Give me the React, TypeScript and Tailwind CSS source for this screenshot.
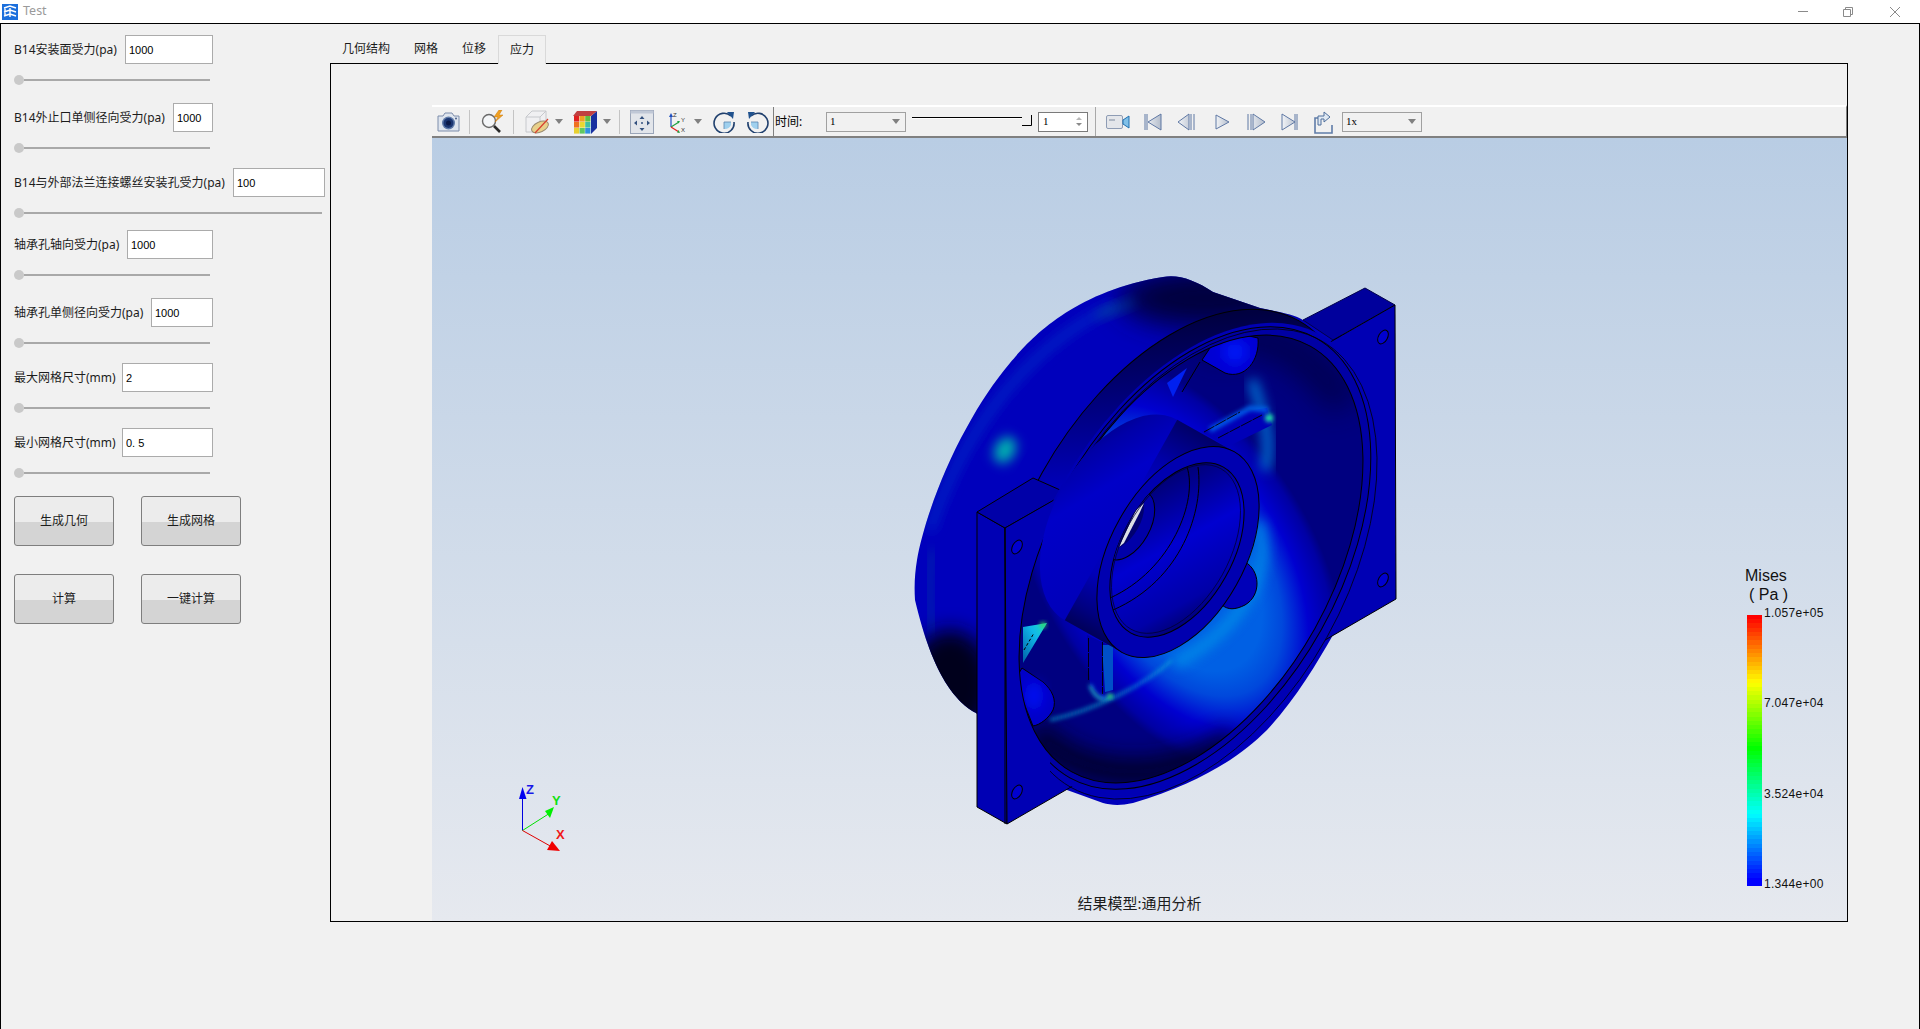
const ANGLE = -60.75;

type Row = {
  label: string;
  value: string;
  inputWidth: string;
  fieldWidth: string;
  top: string;
};

const rows: Row[] = [
  { label: "B14安装面受力(pa)", value: "1000", inputWidth: "w-[88px]", fieldWidth: "w-[199px]", top: "mt-[11px]" },
  { label: "B14外止口单侧径向受力(pa)", value: "1000", inputWidth: "w-[40px]", fieldWidth: "w-[199px]", top: "mt-[18px]" },
  { label: "B14与外部法兰连接螺丝安装孔受力(pa)", value: "100", inputWidth: "w-[92px]", fieldWidth: "w-[311px]", top: "mt-[15px]" },
  { label: "轴承孔轴向受力(pa)", value: "1000", inputWidth: "w-[86px]", fieldWidth: "w-[199px]", top: "mt-[12px]" },
  { label: "轴承孔单侧径向受力(pa)", value: "1000", inputWidth: "w-[62px]", fieldWidth: "w-[199px]", top: "mt-[18px]" },
  { label: "最大网格尺寸(mm)", value: "2", inputWidth: "w-[91px]", fieldWidth: "w-[199px]", top: "mt-[15px]" },
  { label: "最小网格尺寸(mm)", value: "0. 5", inputWidth: "w-[91px]", fieldWidth: "w-[199px]", top: "mt-[15px]" },
];

function Field({ row }: { row: Row }) {
  return (
    <div className={row.top}>
      <div className={`flex h-[29px] items-center justify-between ${row.fieldWidth}`}>
        <span className="whitespace-nowrap text-[12px] text-[#1c1c1c]">{row.label}</span>
        <input
          readOnly
          value={row.value}
          className={`h-[29px] border border-[#ababab] bg-white pl-[3px] font-['Liberation_Sans',sans-serif] text-[11px] text-black outline-none ${row.inputWidth}`}
        />
      </div>
      <div className={`mt-[11px] flex h-[10px] items-center ${row.fieldWidth === "w-[311px]" ? "w-[308px]" : "w-[196px]"}`}>
        <div className="h-[10px] w-[10px] rounded-full bg-[#c9c9c9]" />
        <div className="h-[2px] flex-1 bg-[#a9a9a9]" />
      </div>
    </div>
  );
}

function PanelButton({ text }: { text: string }) {
  return (
    <button className="h-[50px] w-[100px] rounded-[3px] border border-[#7e7e7e] bg-[linear-gradient(#ececec_52%,#d4d4d4_52%)] text-[12px] text-[#1c1c1c]">
      {text}
    </button>
  );
}

function Tilted(props: { cx: number; cy: number; rx: number; ry: number; fill?: string; stroke?: string; sw?: number }) {
  const { cx, cy, rx, ry, fill = "none", stroke = "none", sw = 1 } = props;
  return (
    <ellipse
      cx={cx}
      cy={cy}
      rx={rx}
      ry={ry}
      fill={fill}
      stroke={stroke}
      strokeWidth={sw}
      transform={`rotate(${ANGLE} ${cx} ${cy})`}
    />
  );
}

// quad joining a tilted ellipse to a copy of itself moved by (dx, dy)
function sweepPath(cx: number, cy: number, rx: number, ry: number, dx: number, dy: number) {
  const a = (ANGLE * Math.PI) / 180;
  const u = dx * Math.cos(a) + dy * Math.sin(a);
  const v = -dx * Math.sin(a) + dy * Math.cos(a);
  const t = Math.atan2(-ry * u, rx * v);
  const pt = (p: number) => [
    cx + rx * Math.cos(p) * Math.cos(a) - ry * Math.sin(p) * Math.sin(a),
    cy + rx * Math.cos(p) * Math.sin(a) + ry * Math.sin(p) * Math.cos(a),
  ];
  const [x1, y1] = pt(t);
  const [x2, y2] = pt(t + Math.PI);
  return `M${x1} ${y1}L${x1 + dx} ${y1 + dy}L${x2 + dx} ${y2 + dy}L${x2} ${y2}Z`;
}

function Arrow() {
  return <div className="h-0 w-0 border-x-[4px] border-t-[5px] border-x-transparent border-t-[#808080]" />;
}

function Sep() {
  return <div className="h-[24px] w-px bg-[#c4c4c4]" />;
}

function Combo({ text, width }: { text: string; width: string }) {
  return (
    <div className={`flex h-[20px] items-center justify-between border border-[#a0a0a0] pl-[3px] pr-[5px] font-['Liberation_Serif',serif] text-[11px] text-black ${width}`}>
      <span>{text}</span>
      <Arrow />
    </div>
  );
}

function CameraIcon() {
  return (
    <svg width="23" height="20" viewBox="0 0 23 20">
      <path d="M1 4h5l2-3h7l2 3h5v15H1z" fill="#dfe5ee" stroke="#7d8dab" strokeWidth="1" />
      <circle cx="11.5" cy="11" r="6.5" fill="#5f7aa8" />
      <circle cx="11.5" cy="11" r="5" fill="#1b3672" />
      <circle cx="11.5" cy="11" r="2.5" fill="#0b1a48" />
      <circle cx="19" cy="6.5" r="1" fill="#4a5f88" />
    </svg>
  );
}

function ZoomIcon() {
  return (
    <svg width="25" height="24" viewBox="0 0 25 24">
      <circle cx="9" cy="11" r="6.5" fill="#f4f6f8" stroke="#6a6a6a" strokeWidth="1.4" />
      <path d="M14 16l6 6" stroke="#2a2a2a" strokeWidth="2.6" />
      <path d="M19 0l-5 7h4l-3 5 8-7h-4l3-5z" fill="#f0a020" stroke="#c87810" strokeWidth="0.5" />
    </svg>
  );
}

function BoxIcon() {
  return (
    <svg width="27" height="24" viewBox="0 0 27 24">
      <path d="M1 7l6-6h14v14l-6 7H1z" fill="#f0f0f2" stroke="#c6c8cc" strokeWidth="1" />
      <path d="M1 7h14v15M15 7l6-6" fill="none" stroke="#c6c8cc" strokeWidth="1" />
      <ellipse cx="15" cy="17" rx="9" ry="5" fill="#e8d08a" stroke="#9a8a70" strokeWidth="1" transform="rotate(-25 15 17)" />
      <path d="M10 23L23 9" stroke="#d84030" strokeWidth="1.2" />
    </svg>
  );
}

function CubeIcon() {
  const cells = ["#e02020", "#f0a020", "#60c040", "#f07020", "#e8d830", "#40c0a0", "#e8d030", "#60c860", "#3090e0"];
  return (
    <svg width="24" height="24" viewBox="0 0 24 24">
      <path d="M18 6l6-5v17l-6 6z" fill="#1830a0" />
      <path d="M4 1h20l-6 5H0z" fill="#c04040" />
      {cells.map((c, i) => (
        <rect key={i} x={1 + (i % 3) * 5.6} y={6 + Math.floor(i / 3) * 6} width="5.2" height="5.6" fill={c} />
      ))}
    </svg>
  );
}

function FitIcon() {
  return (
    <svg width="24" height="24" viewBox="0 0 24 24">
      <rect x="0.5" y="0.5" width="23" height="23" fill="#e2e5ea" stroke="#9aa5b8" />
      <rect x="0.5" y="0.5" width="23" height="3" fill="#c0c8d6" />
      <path d="M12 6l-2.5 3h5zM12 21l-2.5-3h5zM4 13l3-2.5v5zM20 13l-3-2.5v5z" fill="#33517f" />
      <circle cx="12" cy="13" r="1" fill="#33517f" />
    </svg>
  );
}

function AxesIcon() {
  return (
    <svg width="19" height="24" viewBox="0 0 19 24">
      <path d="M3 17V6" stroke="#2050c0" strokeWidth="1.2" />
      <path d="M3 3L1 7h4z" fill="#2050c0" />
      <path d="M3 17l8-5" stroke="#20a040" strokeWidth="1.2" />
      <path d="M3 17l8 5" stroke="#e02020" strokeWidth="1.2" />
      <path d="M12 11l-3 0 1.5 2.5zM12 23l-3-.5 1.5-2.5z" fill="#20a040" />
      <text x="5" y="7" fontSize="6" fill="#333" fontFamily="Liberation Sans">Z</text>
      <text x="13" y="12" fontSize="6" fill="#333" fontFamily="Liberation Sans">Y</text>
      <text x="13" y="22" fontSize="6" fill="#333" fontFamily="Liberation Sans">X</text>
    </svg>
  );
}

function RotateIcon({ flip }: { flip?: boolean }) {
  return (
    <svg width="22" height="22" viewBox="0 0 22 22" className={flip ? "-scale-x-100" : ""}>
      <path d="M11 11h7v3a7 7 0 0 1-7 4z" fill="#9fd0ee" />
      <path d="M11 11v7M11 11h7" stroke="#5a86b0" strokeWidth="0.8" />
      <path d="M18 5A10 10 0 1 0 21 11" fill="none" stroke="#20406e" strokeWidth="1.6" />
      <path d="M14 1l7 0-1 7z" fill="#20528e" />
    </svg>
  );
}

function VideoIcon() {
  return (
    <svg width="24" height="18" viewBox="0 0 24 18">
      <rect x="0.5" y="2.5" width="16" height="13" rx="1.5" fill="#e4e6ea" stroke="#8e9cb4" />
      <rect x="3" y="6" width="6" height="2" fill="#b0b8c4" />
      <path d="M17 7l6-4v12l-6-4z" fill="#80c0e8" stroke="#2070b0" strokeWidth="1" />
    </svg>
  );
}

function Media({ d }: { d: string }) {
  return (
    <svg width="19" height="18" viewBox="0 0 19 18">
      <path d={d} fill="url(#media)" stroke="#5f78a4" strokeWidth="1" />
    </svg>
  );
}

function ExportIcon() {
  return (
    <svg width="19" height="24" viewBox="0 0 19 24">
      <path d="M4 8H1v15h17v-8" fill="none" stroke="#5f7ca8" strokeWidth="1.6" />
      <path d="M4 15V6h6V2l6 5-6 5V9H7v6z" fill="#dfe8f2" stroke="#4f6f9c" strokeWidth="1" />
    </svg>
  );
}

function Toolbar() {
  return (
    <div className="flex h-[33px] items-center border-b-2 border-r border-t-2 border-b-[#808080] border-r-[#808080] border-t-white bg-[#f1f1f1]">
      <svg width="0" height="0" className="absolute">
        <defs>
          <linearGradient id="media" x1="0" x2="1" y1="0" y2="0">
            <stop offset="0" stopColor="#f2f4f7" />
            <stop offset="1" stopColor="#b4bdcc" />
          </linearGradient>
        </defs>
      </svg>
      <div className="ml-[5px]"><CameraIcon /></div>
      <div className="ml-[9px]"><Sep /></div>
      <div className="ml-[10px]"><ZoomIcon /></div>
      <div className="ml-[8px]"><Sep /></div>
      <div className="ml-[11px]"><BoxIcon /></div>
      <div className="ml-[3px]"><Arrow /></div>
      <div className="ml-[10px]"><CubeIcon /></div>
      <div className="ml-[6px]"><Arrow /></div>
      <div className="ml-[8px]"><Sep /></div>
      <div className="ml-[10px]"><FitIcon /></div>
      <div className="ml-[14px]"><AxesIcon /></div>
      <div className="ml-[7px]"><Arrow /></div>
      <div className="ml-[11px]"><RotateIcon /></div>
      <div className="ml-[12px]"><RotateIcon flip /></div>
      <div className="ml-[4px] h-full w-px bg-[#808080]" />
      <span className="ml-px w-[51px] text-[12px] text-black">时间:</span>
      <Combo text="1" width="w-[80px]" />
      <svg width="120" height="20" viewBox="0 0 120 20" className="ml-[6px]">
        <path d="M0 5.5h110" stroke="#000" strokeWidth="1" />
        <path d="M0 6.5h110" stroke="#fff" strokeWidth="1" />
        <path d="M110 13.5h9.5V3" fill="none" stroke="#000" strokeWidth="1" />
      </svg>
      <div className="ml-[6px] flex h-[20px] w-[50px] items-center justify-between border border-[#7a7a7a] bg-white pl-[4px] pr-[5px] font-['Liberation_Serif',serif] text-[11px] text-black">
        <span>1</span>
        <div className="flex flex-col gap-[3px]">
          <div className="h-0 w-0 border-x-[3px] border-b-[3px] border-x-transparent border-b-[#b8b8b8]" />
          <div className="h-0 w-0 border-x-[3px] border-t-[3px] border-x-transparent border-t-[#8a8a8a]" />
        </div>
      </div>
      <div className="ml-[7px] h-full w-px bg-[#a8a8a8]" />
      <div className="ml-[10px]"><VideoIcon /></div>
      <div className="ml-[14px]"><Media d="M1 1v16M3 1v16M4 9L17 1v16z" /></div>
      <div className="ml-[14px]"><Media d="M17 1v16M14 1v16M12 1v16L1 9z" /></div>
      <div className="ml-[18px]"><Media d="M2 2v14l13-7z" /></div>
      <div className="ml-[14px]"><Media d="M1 1v16M4 1v16M6 1v16l12-8z" /></div>
      <div className="ml-[14px]"><Media d="M17 1v16M15 1v16M2 1v16l13-8z" /></div>
      <div className="ml-[15px]"><ExportIcon /></div>
      <div className="ml-[9px]"><Combo text="1x" width="w-[80px]" /></div>
    </div>
  );
}

function Model() {
  const shell =
    "M17 300C22 270 40 215 67 167C80 143 94 122 110 103C128 82 170 32 263 17C278 14 295 20 313 32L360 48C380 52 395 55 403 60L440 72L496 200L433 375C417 403 395 440 367 470C340 497 300 523 233 543C220 546 210 545 203 543L167 530L76 453C57 443 33 417 15 340C14 325 15 312 17 300Z";
  return (
    <svg
      width="520"
      height="580"
      viewBox="0 0 520 580"
      className="absolute left-[468px] top-[122px]"
    >
      <defs>
        <filter id="b2" x="-50%" y="-50%" width="200%" height="200%"><feGaussianBlur stdDeviation="2" /></filter>
        <filter id="b6" x="-50%" y="-50%" width="200%" height="200%"><feGaussianBlur stdDeviation="6" /></filter>
        <filter id="b10" x="-60%" y="-60%" width="220%" height="220%"><feGaussianBlur stdDeviation="10" /></filter>
        <filter id="b14" x="-60%" y="-60%" width="220%" height="220%"><feGaussianBlur stdDeviation="14" /></filter>
        <clipPath id="shellClip"><path d={shell} /></clipPath>
        <clipPath id="cavityClip">
          <Tilted cx={291} cy={299} rx={244} ry={142} />
        </clipPath>
        <clipPath id="boreClip">
          <Tilted cx={277} cy={290} rx={95} ry={55.5} />
        </clipPath>
        <clipPath id="rimLines">
          <polygon points="167,0 520,0 520,580 150,580 150,470 167,233" />
        </clipPath>
        <radialGradient
          id="cavity"
          gradientUnits="userSpaceOnUse"
          cx="0"
          cy="0"
          r="1"
          gradientTransform={`translate(278 292) rotate(${ANGLE}) scale(230 136)`}
        >
          <stop offset="0.5" stopColor="#0060e4" />
          <stop offset="0.62" stopColor="#0048dc" />
          <stop offset="0.78" stopColor="#0000d0" />
          <stop offset="0.94" stopColor="#0000a4" />
          <stop offset="1" stopColor="#000080" />
        </radialGradient>
        <linearGradient id="band" gradientUnits="userSpaceOnUse" x1="150" y1="220" x2="400" y2="60">
          <stop offset="0" stopColor="#0018d4" />
          <stop offset="0.45" stopColor="#0000b8" />
          <stop offset="1" stopColor="#000040" />
        </linearGradient>
        <linearGradient id="hub" gradientUnits="userSpaceOnUse" x1="309" y1="172" x2="191" y2="380">
          <stop offset="0" stopColor="#000060" />
          <stop offset="0.2" stopColor="#0000a8" />
          <stop offset="0.35" stopColor="#0000c8" />
          <stop offset="0.75" stopColor="#0000b8" />
          <stop offset="0.9" stopColor="#000080" />
          <stop offset="1" stopColor="#000050" />
        </linearGradient>
        <linearGradient id="bore" gradientUnits="userSpaceOnUse" x1="325" y1="215" x2="228" y2="372">
          <stop offset="0" stopColor="#000058" />
          <stop offset="0.45" stopColor="#0000d0" />
          <stop offset="0.75" stopColor="#0000a8" />
          <stop offset="1" stopColor="#000038" />
        </linearGradient>
        <linearGradient id="cyanWedge" x1="1" y1="0" x2="0" y2="1">
          <stop offset="0" stopColor="#20e0c0" />
          <stop offset="0.4" stopColor="#10b8e8" />
          <stop offset="1" stopColor="#0060a8" />
        </linearGradient>
      </defs>

      {/* back shell */}
      <path d={shell} fill="#0000bc" />
      <g clipPath="url(#shellClip)">
        <ellipse cx="305" cy="38" rx="85" ry="30" fill="#00003c" filter="url(#b14)" />
        <ellipse cx="50" cy="425" rx="42" ry="55" fill="#00001e" filter="url(#b10)" />
        <path d="M30 270C60 180 120 90 215 45" fill="none" stroke="#0a30c8" strokeWidth="6" filter="url(#b6)" />
        <ellipse cx="105" cy="190" rx="10" ry="14" fill="#00b0b0" filter="url(#b6)" transform="rotate(30 105 190)" />
        <ellipse cx="215" cy="49" rx="22" ry="5" fill="#006090" filter="url(#b6)" transform="rotate(-22 215 49)" opacity="0.5" />
        <path d="M33 290C28 320 28 335 33 370" fill="none" stroke="#006a90" strokeWidth="5" filter="url(#b6)" opacity="0.5" />
      </g>

      {/* rim */}
      <Tilted cx={273} cy={286} rx={258} ry={150} fill="url(#band)" stroke="#000" />

      {/* plate side and top faces */}
      <path d="M77 252L105 268L107 564L77 547Z" fill="#0000b4" stroke="#000" strokeWidth="1" />
      <path d="M77 252L133 218L167 233L105 268Z" fill="#0000a8" stroke="#000" strokeWidth="1" />
      <path d="M403 60L465 28L495 45L433 80Z" fill="#00009c" stroke="#00004a" strokeWidth="1" />

      {/* plate */}
      <path d="M105 268L495 45L496 339L107 564Z" fill="#0000b4" stroke="#000" strokeWidth="1" />
      <path d="M105 268V564" stroke="#000" strokeWidth="1" />
      <Tilted cx={295} cy={300} rx={258} ry={153} fill="#0000b4" />
      <g clipPath="url(#rimLines)">
        <Tilted cx={293} cy={298} rx={252} ry={147} fill="#0000a4" stroke="#000" />
        <Tilted cx={296} cy={304} rx={256} ry={150} stroke="#000" sw={0.7} />
      </g>
      <Tilted cx={117} cy={287} rx={7.5} ry={4.5} fill="#0000d0" stroke="#000" />
      <Tilted cx={483} cy={77} rx={7.5} ry={4.5} fill="#0000d0" stroke="#000" />
      <Tilted cx={483} cy={320} rx={7.5} ry={4.5} fill="#0000d0" stroke="#000" />
      <Tilted cx={117} cy={532} rx={7.5} ry={4.5} fill="#0000d0" stroke="#000" />

      {/* cavity */}
      <Tilted cx={291} cy={299} rx={244} ry={142} fill="url(#cavity)" />
      <g clipPath="url(#cavityClip)">
        <path d="M300 85C340 65 400 75 445 145" fill="none" stroke="#000040" strokeWidth="36" filter="url(#b14)" opacity="0.7" />
        <path d="M135 470C165 510 250 535 335 480" fill="none" stroke="#000024" strokeWidth="30" filter="url(#b10)" opacity="0.8" />
        <path d="M150 460C195 450 245 425 272 400" fill="none" stroke="#10b0d8" strokeWidth="3" filter="url(#b2)" opacity="0.7" />
        <path d="M358 262C375 310 340 370 275 403" fill="none" stroke="#0090e8" strokeWidth="12" filter="url(#b6)" opacity="0.8" />
        <path d="M352 120C365 160 372 180 365 210" fill="none" stroke="#0070d0" strokeWidth="10" filter="url(#b6)" />
        {/* bosses */}
        <path d="M302 100L325 113C345 120 360 100 358 78L322 70Z" fill="#0000d4" stroke="#000" strokeWidth="1" />
        <ellipse cx="335" cy="92" rx="12" ry="12" fill="#0018f4" filter="url(#b6)" />
        <path d="M345 302C360 310 362 335 345 345C335 350 328 350 322 345Z" fill="#0000b8" stroke="#000" strokeWidth="1" />
        <path d="M122 408L143 422C152 430 157 440 153 450C149 458 140 465 133 466L115 420Z" fill="#0000c8" stroke="#000" strokeWidth="1" />
        <ellipse cx="134" cy="436" rx="9" ry="14" fill="#0010f0" filter="url(#b6)" />
        {/* ribs */}
        <path d="M267 123L287 108L273 137Z" fill="#0020f0" />
        <path d="M282 132L300 102" stroke="#000" strokeWidth="1" />
        <path d="M123 367L147 363L123 403Z" fill="url(#cyanWedge)" />
        <path d="M124 390L134 373" stroke="#000" strokeWidth="1" strokeDasharray="3 2" />
        <circle cx="143" cy="365" r="3" fill="#30d060" filter="url(#b2)" />
        <path d="M302 172L338 152L367 148L372 165L327 187Z" fill="#0000b8" />
        <path d="M310 170L350 148L368 150" fill="none" stroke="#0060e8" strokeWidth="5" filter="url(#b2)" />
        <path d="M304 172L340 152M318 178L362 155" stroke="#000" strokeWidth="0.9" strokeDasharray="12 1" />
        <circle cx="369" cy="158" r="4" fill="#20e0a8" filter="url(#b2)" />
        <path d="M187 375L213 387V433L203 440L190 425Z" fill="#0000a8" />
        <path d="M202 385H213V430L205 432Z" fill="#0050c8" />
        <path d="M188.500 378V420M202.500 382V434" stroke="#000" strokeWidth="0.9" strokeDasharray="14 1" />
        <path d="M190 425C195 438 202 442 212 436" fill="none" stroke="#20c0e0" strokeWidth="3" filter="url(#b2)" />
        <circle cx="210" cy="436" r="2.5" fill="#30e060" filter="url(#b2)" />
      </g>
      <Tilted cx={291} cy={299} rx={244} ry={142} stroke="#000" />

      {/* hub */}
      <Tilted cx={221} cy={260} rx={115} ry={67} fill="url(#hub)" />
      <path d={sweepPath(278, 292, 115, 67, -57, -32)} fill="url(#hub)" />
      <Tilted cx={278} cy={292} rx={115} ry={67} fill="#0000b0" stroke="#000" />
      <Tilted cx={277} cy={290} rx={95} ry={55.5} fill="url(#bore)" stroke="#000" />
      <g clipPath="url(#boreClip)">
        <Tilted cx={228} cy={265} rx={38} ry={22} fill="#0000a8" stroke="#000" />
        <Tilted cx={222} cy={260} rx={32} ry={18} fill="#000070" />
        <path d="M244 243L236 250L219 287L224 283L240 252Z" fill="#dadfe6" />
        <path d="M287 207C298 240 272 310 210 338M298 207C304 250 282 320 213 350" fill="none" stroke="#000" strokeWidth="1" />
      </g>
      <Tilted cx={276} cy={289} rx={92} ry={53} stroke="#000030" sw={0.7} />
    </svg>
  );
}

function Triad() {
  return (
    <svg width="90" height="80" viewBox="0 0 90 80" className="absolute left-[70px] top-[645px]">
      <path d="M20.500 47.500V10" stroke="#0000e0" strokeWidth="1" />
      <path d="M20.500 4L17 16H24.500Z" fill="#0000f0" />
      <path d="M20.500 47.500L48 30" stroke="#00e000" strokeWidth="1" />
      <path d="M52 24L43 28L48 35Z" fill="#00f000" />
      <path d="M20.500 47.500L50 64" stroke="#e00000" strokeWidth="1" />
      <path d="M58 68L50 58L45 67Z" fill="#f00000" />
      <text x="24" y="11" fontSize="13" fontWeight="700" fill="#1818e8" fontFamily="Liberation Sans">Z</text>
      <text x="50" y="22" fontSize="13" fontWeight="700" fill="#10e010" fontFamily="Liberation Sans">Y</text>
      <text x="54" y="56" fontSize="13" fontWeight="700" fill="#f01818" fontFamily="Liberation Sans">X</text>
    </svg>
  );
}

function Legend() {
  const bands = Array.from({ length: 64 }, (_, i) => i);
  const ticks = ["1.057e+05", "7.047e+04", "3.524e+04", "1.344e+00"];
  return (
    <div className="absolute left-[1313px] top-[429px] w-[110px] font-['Liberation_Sans',sans-serif] text-[#111]">
      <div className="h-[18.500px] text-[16px] leading-[18.500px]">Mises</div>
      <div className="h-[18.500px] pl-[4px] text-[16px] leading-[18.500px]">( Pa )</div>
      <div className="flex">
        <div className="ml-[2px] mt-[11px] flex h-[271px] w-[15px] flex-col">
          {bands.map((i) => (
            <div key={i} className="flex-1" style={{ backgroundColor: `hsl(${Math.min(240, (i / 62) * 240)} 100% 50%)` }} />
          ))}
        </div>
        <div className="ml-[2px] mt-[1px] flex h-[287px] flex-col justify-between text-[12px] leading-[16px] tracking-[0.3px]">
          {ticks.map((t) => (
            <span key={t}>{t}</span>
          ))}
        </div>
      </div>
    </div>
  );
}

export default function App() {
  return (
    <div className="h-[1029px] w-[1920px] overflow-hidden bg-[#f1f1f1] font-['Noto_Sans','Noto_Sans_CJK_SC',sans-serif]">
      {/* title bar */}
      <div className="flex h-[23px] items-center bg-white">
        <svg width="16" height="16" viewBox="0 0 16 16" className="ml-[2px]">
          <rect width="16" height="16" fill="#1b6fdc" />
          <path d="M2 4l6-2 6 2M2 8l6-2 6 2M2 12l6-2 6 2M3 4v8M8 4v9" fill="none" stroke="#fff" strokeWidth="1.4" />
        </svg>
        <span className="ml-[5px] text-[12.500px] text-[#9a9a9a]">Test</span>
        <div className="ml-auto flex items-center">
          <div className="mr-[35px] h-px w-[10px] bg-[#8a8a8a]" />
          <svg width="10" height="10" viewBox="0 0 10 10" className="mr-[37px]">
            <path d="M0.500 2.500H7.500V9.500H0.500ZM2.500 2.500V0.500H9.500V7.500H7.500" fill="none" stroke="#8a8a8a" strokeWidth="1" />
          </svg>
          <svg width="10" height="10" viewBox="0 0 10 10" className="mr-[20px]">
            <path d="M0 0L10 10M10 0L0 10" stroke="#8a8a8a" strokeWidth="1" />
          </svg>
        </div>
      </div>

      {/* main window */}
      <div className="flex h-[1006px] border-l border-r border-t border-black">
        <div className="w-[329px] shrink-0 pl-[13px]">
          {rows.map((row) => (
            <Field key={row.label} row={row} />
          ))}
          <div className="mt-[18px] flex gap-[27px]">
            <PanelButton text="生成几何" />
            <PanelButton text="生成网格" />
          </div>
          <div className="mt-[28px] flex gap-[27px]">
            <PanelButton text="计算" />
            <PanelButton text="一键计算" />
          </div>
        </div>

        <div className="w-[1518px] pt-[10px]">
          <div className="relative z-10 flex h-[29px] items-end text-[12px] text-[#1c1c1c]">
            <div className="flex h-[28px] w-[72px] items-center justify-center">几何结构</div>
            <div className="flex h-[28px] w-[48px] items-center justify-center">网格</div>
            <div className="flex h-[28px] w-[48px] items-center justify-center">位移</div>
            <div className="-mb-px flex h-[29px] w-[48px] items-center justify-center border border-b-0 border-[#d9d9d9] bg-[#f1f1f1]">应力</div>
          </div>
          <div className="h-[859px] border border-black pl-[101px] pt-[41px]">
            <Toolbar />
            <div className="relative flex h-[783px] flex-col items-center justify-end bg-[linear-gradient(#b9cde4,#e6e9ef)] pb-[7px]">
              <Model />
              <Triad />
              <Legend />
              <span className="text-[15px] leading-[22px] text-[#1c1c1c]">结果模型:通用分析</span>
            </div>
          </div>
        </div>
      </div>
    </div>
  );
}
